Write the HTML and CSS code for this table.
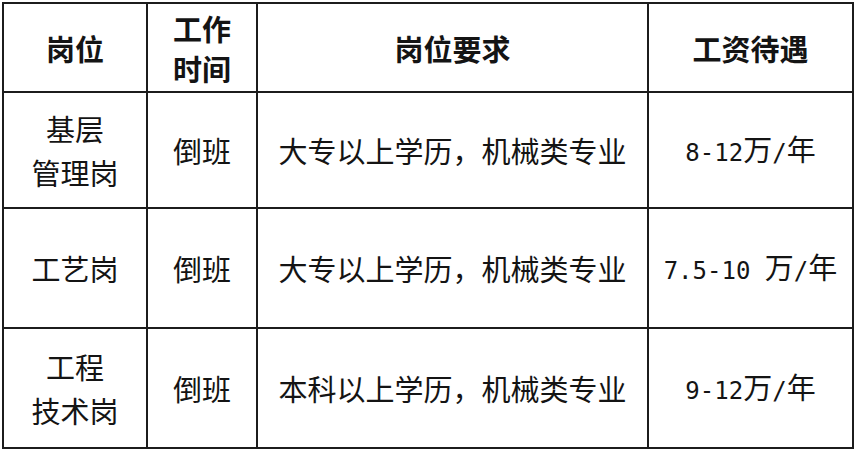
FILE: index.html
```html
<!DOCTYPE html>
<html lang="zh">
<head>
<meta charset="utf-8">
<link rel="stylesheet" href="styles.css">
</head>
<body>
<div class="page">
<table class="jobs">
  <colgroup>
    <col class="c1"><col class="c2"><col class="c3"><col class="c4">
  </colgroup>
  <thead>
    <tr class="head">
      <th>岗位</th>
      <th class="two">工作<br>时间</th>
      <th>岗位要求</th>
      <th>工资待遇</th>
    </tr>
  </thead>
  <tbody>
    <tr class="r1">
      <td class="two">基层<br>管理岗</td>
      <td>倒班</td>
      <td>大专以上学历，机械类专业</td>
      <td><span class="num">8-12</span>万<span class="num">/</span>年</td>
    </tr>
    <tr class="r2">
      <td>工艺岗</td>
      <td>倒班</td>
      <td>大专以上学历，机械类专业</td>
      <td><span class="num">7.5-10 </span>万<span class="num">/</span>年</td>
    </tr>
    <tr class="r3">
      <td class="two">工程<br>技术岗</td>
      <td>倒班</td>
      <td>本科以上学历，机械类专业</td>
      <td><span class="num">9-12</span>万<span class="num">/</span>年</td>
    </tr>
  </tbody>
</table>
</div>
</body>
</html>
```
FILE: styles.css
```css
html, body {
  margin: 0;
  padding: 0;
  background: #ffffff;
}
.page {
  padding: 2px 0 0 2px;
}
.jobs {
  border-collapse: collapse;
  table-layout: fixed;
  width: 850px;
  font-family: "Noto Sans CJK SC", sans-serif;
  font-size: 29px;
  color: #141414;
}
.c1 { width: 144px; }
.c2 { width: 110px; }
.c3 { width: 391px; }
.c4 { width: 205px; }
.jobs th, .jobs td {
  border: 2px solid #1c1c1c;
  text-align: center;
  vertical-align: middle;
  padding: 0;
  line-height: 40px;
}
.jobs th {
  font-weight: 700;
}
.jobs .two {
  line-height: 44px;
}
.jobs th.two {
  line-height: 40px;
}
.head th { height: 87px; }
.r1 td { height: 114px; }
.r2 td { height: 118px; }
.r3 td { height: 118px; }
.num {
  font-family: "DejaVu Sans Mono", monospace;
  font-size: 24px;
}
```
